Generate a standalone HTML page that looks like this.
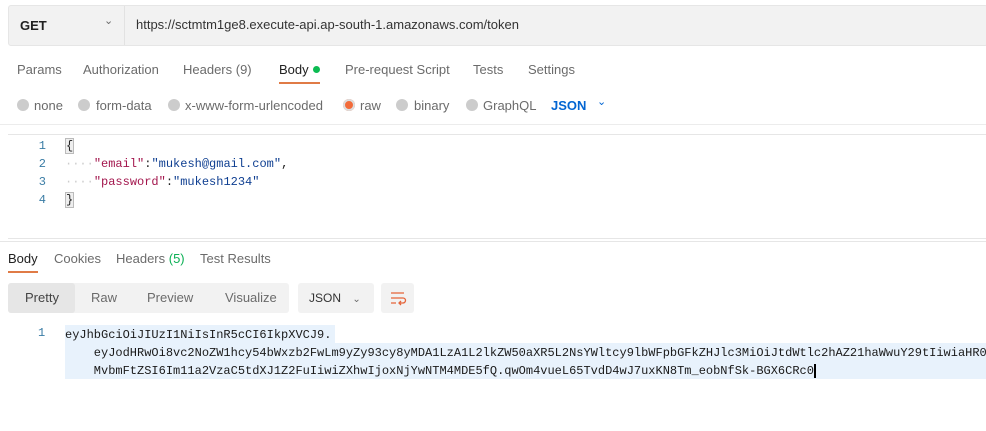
<!DOCTYPE html>
<html><head><style>
body{margin:0;width:986px;height:431px;background:#fff;font-family:"Liberation Sans",sans-serif;font-size:13px;color:#212121;position:relative;overflow:hidden}
.a{position:absolute;white-space:nowrap}
.g{color:#6b6b6b}
.mono{font-family:"Liberation Mono",monospace;font-size:12px}
.c{position:absolute;width:12px;height:12px;border-radius:50%;background:#ccc;top:99px}
</style></head><body>
<div class="a" style="left:8px;top:5px;width:978px;height:39px;background:#f2f2f2;border:1px solid #e6e6e6;border-radius:3px"></div>
<div class="a" style="left:124px;top:6px;width:1px;height:39px;background:#e2e2e2"></div>
<div class="a" style="left:20px;top:18px;font-weight:bold;font-size:13px">GET</div>
<div class="a g" style="left:104px;top:14px;font-size:11px">&#8964;</div>
<div class="a" style="left:136px;top:17px;color:#333">https://sctmtm1ge8.execute-api.ap-south-1.amazonaws.com/token</div>

<div class="a g" style="left:17px;top:62px">Params</div>
<div class="a g" style="left:83px;top:62px">Authorization</div>
<div class="a g" style="left:183px;top:62px">Headers (9)</div>
<div class="a" style="left:279px;top:62px">Body <span style="display:inline-block;width:7px;height:7px;border-radius:50%;background:#0cbb52;vertical-align:1px;margin-left:1px"></span></div>
<div class="a" style="left:279px;top:82px;width:41px;height:2px;background:#e07b46"></div>
<div class="a g" style="left:345px;top:62px">Pre-request Script</div>
<div class="a g" style="left:473px;top:62px">Tests</div>
<div class="a g" style="left:528px;top:62px">Settings</div>

<div class="c" style="left:17px"></div><div class="a g" style="left:34px;top:98px">none</div>
<div class="c" style="left:78px"></div><div class="a g" style="left:96px;top:98px">form-data</div>
<div class="c" style="left:168px"></div><div class="a g" style="left:185px;top:98px">x-www-form-urlencoded</div>
<div class="c" style="left:343px;background:#f26b3a;box-shadow:0 0 0 2px #ddd inset"></div><div class="a g" style="left:360px;top:98px">raw</div>
<div class="c" style="left:396px"></div><div class="a g" style="left:414px;top:98px">binary</div>
<div class="c" style="left:466px"></div><div class="a g" style="left:483px;top:98px">GraphQL</div>
<div class="a" style="left:551px;top:98px;color:#0265d2;font-weight:bold">JSON</div>
<div class="a" style="left:597px;top:95px;color:#0265d2;font-size:11px">&#8964;</div>
<div class="a" style="left:0;top:124px;width:986px;height:1px;background:#ececec"></div>
<div class="a" style="left:8px;top:134px;width:978px;height:103px;border-top:1px solid #e6e6e6;border-bottom:1px solid #e6e6e6"></div>

<div class="a mono" style="left:38px;top:137px;line-height:18px;color:#3a7ca5;text-align:right;width:8px">1<br>2<br>3<br>4</div>
<div class="a mono" style="left:65px;top:137px;line-height:18px"><span style="background:#eee;border:1px solid #bbb">{</span><br><span style="color:#ccc">····</span><span style="color:#a3164d">"email"</span>:<span style="color:#0f3f91">"mukesh@gmail.com"</span>,<br><span style="color:#ccc">····</span><span style="color:#a3164d">"password"</span>:<span style="color:#0f3f91">"mukesh1234"</span><br><span style="background:#eee;border:1px solid #bbb">}</span></div>
<div class="a" style="left:0;top:241px;width:986px;height:1px;background:#e6e6e6"></div>

<div class="a" style="left:8px;top:251px">Body</div>
<div class="a" style="left:8px;top:271px;width:30px;height:2px;background:#e07b46"></div>
<div class="a g" style="left:54px;top:251px">Cookies</div>
<div class="a g" style="left:116px;top:251px">Headers <span style="color:#0cb055">(5)</span></div>
<div class="a g" style="left:200px;top:251px">Test Results</div>

<div class="a" style="left:8px;top:283px;width:281px;height:30px;background:#f2f2f2;border-radius:3px"></div>
<div class="a" style="left:8px;top:283px;width:67px;height:30px;background:#e6e6e6;border-radius:3px"></div>
<div class="a" style="left:25px;top:290px;color:#444">Pretty</div>
<div class="a g" style="left:91px;top:290px">Raw</div>
<div class="a g" style="left:147px;top:290px">Preview</div>
<div class="a g" style="left:225px;top:290px">Visualize</div>
<div class="a" style="left:298px;top:283px;width:76px;height:30px;background:#f2f2f2;border-radius:3px"></div>
<div class="a" style="left:309px;top:291px;font-size:12px;color:#333">JSON <span class="g" style="font-size:10px;margin-left:8px">&#8964;</span></div>
<div class="a" style="left:381px;top:283px;width:33px;height:30px;background:#f2f2f2;border-radius:3px"></div>
<svg class="a" style="left:389px;top:290px" width="18" height="16" viewBox="0 0 18 16" fill="none" stroke="#e5643a" stroke-width="1.3"><path d="M2 3h13M2 8h12a2.5 2.5 0 0 1 0 5h-4M12 11l-2 2 2 2M2 13h5"/></svg>

<div class="a mono" style="left:38px;top:326px;color:#3a7ca5">1</div>
<div class="a" style="left:65px;top:325px;width:270px;height:18px;background:#e8f2fc"></div>
<div class="a" style="left:65px;top:343px;width:921px;height:36px;background:#e8f2fc"></div>
<div class="a mono" style="left:65px;top:326px;line-height:18px;color:#1a1a1a">eyJhbGciOiJIUzI1NiIsInR5cCI6IkpXVCJ9.<br>&nbsp;&nbsp;&nbsp;&nbsp;eyJodHRwOi8vc2NoZW1hcy54bWxzb2FwLm9yZy93cy8yMDA1LzA1L2lkZW50aXR5L2NsYWltcy9lbWFpbGFkZHJlc3MiOiJtdWtlc2hAZ21haWwuY29tIiwiaHR0<br>&nbsp;&nbsp;&nbsp;&nbsp;MvbmFtZSI6Im11a2VzaC5tdXJ1Z2FuIiwiZXhwIjoxNjYwNTM4MDE5fQ.qwOm4vueL65TvdD4wJ7uxKN8Tm_eobNfSk-BGX6CRc0<span style="border-left:2px solid #000"></span></div>
</body></html>
